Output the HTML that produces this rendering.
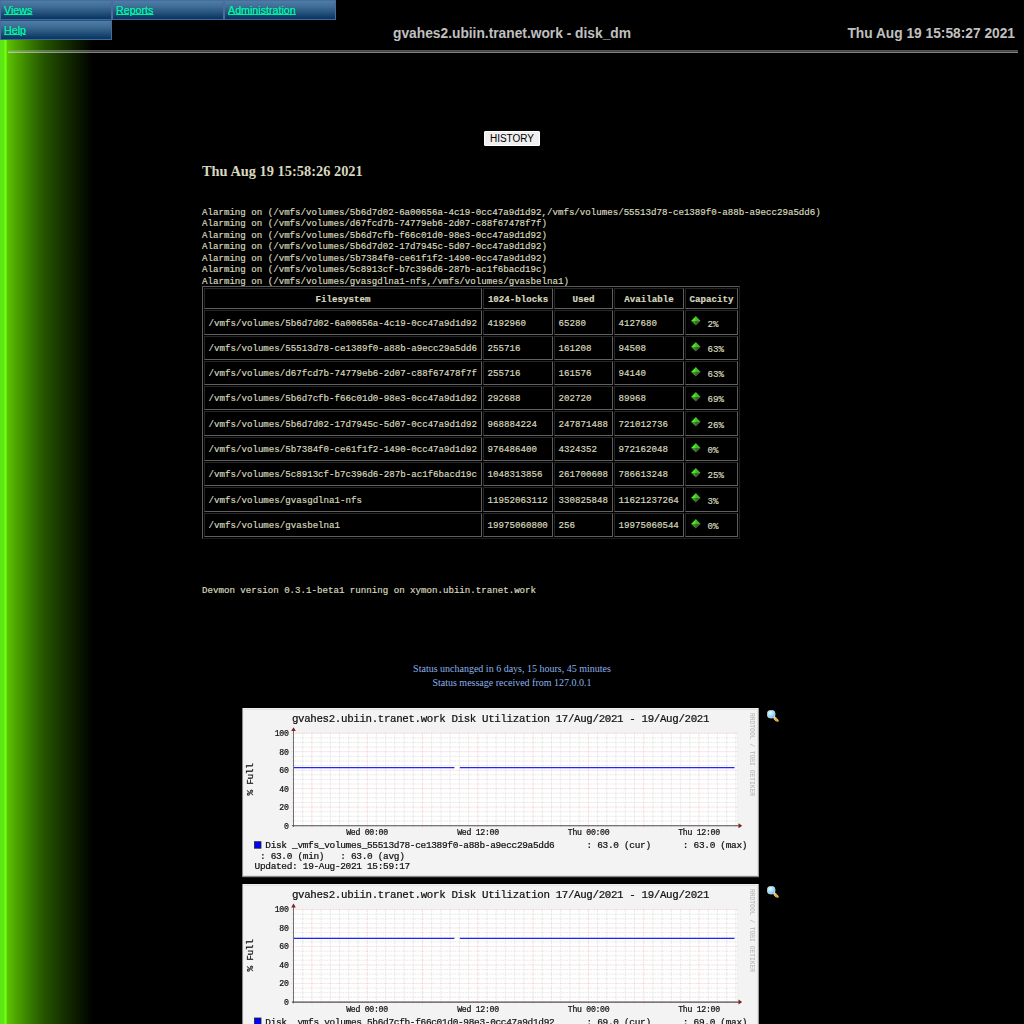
<!DOCTYPE html>
<html><head><meta charset="utf-8"><title>gvahes2.ubiin.tranet.work - disk_dm</title>
<style>
html,body{margin:0;padding:0;}
body{width:1024px;height:1024px;overflow:hidden;position:relative;background:#000;color:#D8D8BF;font-family:"Liberation Serif",serif;}
#bg{position:absolute;left:0;top:0;width:100px;height:1024px;background:linear-gradient(to right,#5ce614 0px,#5ce614 3.9px,#70ff0c 4.7px,#70ff0c 6.1px,#5cc400 7.2px,#4fa800 15px,#3f8a00 25px,#306c00 35px,#245200 45px,#1c4000 55px,#142e00 65px,#0d1e00 75px,#060e00 85px,#000 93px);}
.abs{position:absolute;white-space:pre;}
.mono{font-family:"Liberation Mono",monospace;font-size:9.15px;line-height:11.53px;-webkit-text-stroke:0.18px #D8D8BF;}
.sans{font-family:"Liberation Sans",sans-serif;}
.serif{font-family:"Liberation Serif",serif;}
/* menu */
.mi{position:absolute;width:110px;height:18px;border:1px solid #4a6b9c;border-bottom-color:#43659a;background:linear-gradient(to bottom,#4b7ea7 0%,#3f6e96 30%,#2a5680 60%,#0d3d66 90%,#063860 100%);box-sizing:content-box;}
.mi span{position:absolute;left:3px;top:3.0px;font-family:"Liberation Sans",sans-serif;font-size:10.7px;line-height:13px;color:#00f0a0;text-decoration:underline;text-underline-offset:0.3px;text-decoration-thickness:1px;text-shadow:0 0 0.6px #00f0a0;}
/* table */
.c{position:absolute;box-sizing:border-box;border:1px solid;border-color:#262626 #5e5e5e #606060 #262626;}
</style></head>
<body>
<div id="bg"></div>
<div class="mi" style="left:0px;top:0px"><span>Views</span></div>
<div class="mi" style="left:112px;top:0px"><span>Reports</span></div>
<div class="mi" style="left:224px;top:0px"><span>Administration</span></div>
<div class="mi" style="left:0px;top:20px;border-top-color:#2e4e82"><span>Help</span></div>
<div class="abs sans" style="left:312px;width:400px;text-align:center;top:26.3px;font-size:13.78px;line-height:16px;font-weight:bold;color:#c0c0c0">gvahes2.ubiin.tranet.work - disk_dm</div>
<div class="abs sans" style="right:9px;top:26.3px;font-size:13.75px;line-height:16px;font-weight:bold;color:#c0c0c0">Thu Aug 19 15:58:27 2021</div>
<div class="abs" style="left:8px;top:50px;width:1010px;height:3px;background:linear-gradient(to bottom,rgba(154,154,154,.55) 0,rgba(154,154,154,.55) 1px,rgba(200,200,200,.34) 1px,rgba(200,200,200,.34) 2px,rgba(238,238,238,.54) 2px,rgba(238,238,238,.54) 3px)"></div>
<div class="abs sans" style="left:484px;top:131px;width:56px;height:15px;box-sizing:border-box;background:#efefef;border:1px solid #fff;border-radius:1px;color:#000;font-size:10px;line-height:13px;text-align:center">HISTORY</div>
<div class="abs serif" style="left:202px;top:163px;font-size:14.4px;line-height:17px;font-weight:bold">Thu Aug 19 15:58:26 2021</div>
<div class="abs mono" style="left:202px;top:206.6px">Alarming on (/vmfs/volumes/5b6d7d02-6a00656a-4c19-0cc47a9d1d92,/vmfs/volumes/55513d78-ce1389f0-a88b-a9ecc29a5dd6)
Alarming on (/vmfs/volumes/d67fcd7b-74779eb6-2d07-c88f67478f7f)
Alarming on (/vmfs/volumes/5b6d7cfb-f66c01d0-98e3-0cc47a9d1d92)
Alarming on (/vmfs/volumes/5b6d7d02-17d7945c-5d07-0cc47a9d1d92)
Alarming on (/vmfs/volumes/5b7384f0-ce61f1f2-1490-0cc47a9d1d92)
Alarming on (/vmfs/volumes/5c8913cf-b7c396d6-287b-ac1f6bacd19c)
Alarming on (/vmfs/volumes/gvasgdlna1-nfs,/vmfs/volumes/gvasbelna1)</div>
<div class="abs" style="left:202px;top:286px;width:538px;height:253px;box-sizing:border-box;border:1px solid;border-color:#5c5c5c #202020 #1c1c1c #606060"></div>
<div class="c" style="left:204px;top:288px;width:278px;height:21px"><div class="abs mono" style="left:0;width:276px;text-align:center;top:4.5px;font-weight:bold">Filesystem</div></div>
<div class="c" style="left:483px;top:288px;width:70px;height:21px"><div class="abs mono" style="left:0;width:68px;text-align:center;top:4.5px;font-weight:bold">1024-blocks</div></div>
<div class="c" style="left:554px;top:288px;width:59px;height:21px"><div class="abs mono" style="left:0;width:57px;text-align:center;top:4.5px;font-weight:bold">Used</div></div>
<div class="c" style="left:614px;top:288px;width:70px;height:21px"><div class="abs mono" style="left:0;width:68px;text-align:center;top:4.5px;font-weight:bold">Available</div></div>
<div class="c" style="left:685px;top:288px;width:53px;height:21px"><div class="abs mono" style="left:0;width:51px;text-align:center;top:4.5px;font-weight:bold">Capacity</div></div>
<div class="c" style="left:204px;top:310px;width:278px;height:25px"><div class="abs mono" style="left:3.6px;top:6.54px">/vmfs/volumes/5b6d7d02-6a00656a-4c19-0cc47a9d1d92</div></div>
<div class="c" style="left:483px;top:310px;width:70px;height:25px"><div class="abs mono" style="left:3.6px;top:6.54px">4192960</div></div>
<div class="c" style="left:554px;top:310px;width:59px;height:25px"><div class="abs mono" style="left:3.6px;top:6.54px">65280</div></div>
<div class="c" style="left:614px;top:310px;width:70px;height:25px"><div class="abs mono" style="left:3.6px;top:6.54px">4127680</div></div>
<div class="c" style="left:685px;top:310px;width:53px;height:25px"><svg class="abs" style="left:3.7px;top:4px" width="12" height="12" viewBox="0 0 12 12"><polygon points="5.9,0.9 5.9,5.9 1.1,5.9" fill="#40f810"/><polygon points="5.9,0.9 10.6,5.9 5.9,5.9" fill="#4cb03c"/><polygon points="1.1,5.9 5.9,5.9 5.9,10.6" fill="#3f9030"/><polygon points="5.9,5.9 10.6,5.9 5.9,10.6" fill="#46622a"/></svg><div class="abs mono" style="left:21.6px;top:7.74px">2%</div></div>
<div class="c" style="left:204px;top:336px;width:278px;height:24px"><div class="abs mono" style="left:3.6px;top:6.04px">/vmfs/volumes/55513d78-ce1389f0-a88b-a9ecc29a5dd6</div></div>
<div class="c" style="left:483px;top:336px;width:70px;height:24px"><div class="abs mono" style="left:3.6px;top:6.04px">255716</div></div>
<div class="c" style="left:554px;top:336px;width:59px;height:24px"><div class="abs mono" style="left:3.6px;top:6.04px">161208</div></div>
<div class="c" style="left:614px;top:336px;width:70px;height:24px"><div class="abs mono" style="left:3.6px;top:6.04px">94508</div></div>
<div class="c" style="left:685px;top:336px;width:53px;height:24px"><svg class="abs" style="left:3.7px;top:4px" width="12" height="12" viewBox="0 0 12 12"><polygon points="5.9,0.9 5.9,5.9 1.1,5.9" fill="#40f810"/><polygon points="5.9,0.9 10.6,5.9 5.9,5.9" fill="#4cb03c"/><polygon points="1.1,5.9 5.9,5.9 5.9,10.6" fill="#3f9030"/><polygon points="5.9,5.9 10.6,5.9 5.9,10.6" fill="#46622a"/></svg><div class="abs mono" style="left:21.6px;top:7.24px">63%</div></div>
<div class="c" style="left:204px;top:361px;width:278px;height:24px"><div class="abs mono" style="left:3.6px;top:6.04px">/vmfs/volumes/d67fcd7b-74779eb6-2d07-c88f67478f7f</div></div>
<div class="c" style="left:483px;top:361px;width:70px;height:24px"><div class="abs mono" style="left:3.6px;top:6.04px">255716</div></div>
<div class="c" style="left:554px;top:361px;width:59px;height:24px"><div class="abs mono" style="left:3.6px;top:6.04px">161576</div></div>
<div class="c" style="left:614px;top:361px;width:70px;height:24px"><div class="abs mono" style="left:3.6px;top:6.04px">94140</div></div>
<div class="c" style="left:685px;top:361px;width:53px;height:24px"><svg class="abs" style="left:3.7px;top:4px" width="12" height="12" viewBox="0 0 12 12"><polygon points="5.9,0.9 5.9,5.9 1.1,5.9" fill="#40f810"/><polygon points="5.9,0.9 10.6,5.9 5.9,5.9" fill="#4cb03c"/><polygon points="1.1,5.9 5.9,5.9 5.9,10.6" fill="#3f9030"/><polygon points="5.9,5.9 10.6,5.9 5.9,10.6" fill="#46622a"/></svg><div class="abs mono" style="left:21.6px;top:7.24px">63%</div></div>
<div class="c" style="left:204px;top:386px;width:278px;height:24px"><div class="abs mono" style="left:3.6px;top:6.04px">/vmfs/volumes/5b6d7cfb-f66c01d0-98e3-0cc47a9d1d92</div></div>
<div class="c" style="left:483px;top:386px;width:70px;height:24px"><div class="abs mono" style="left:3.6px;top:6.04px">292688</div></div>
<div class="c" style="left:554px;top:386px;width:59px;height:24px"><div class="abs mono" style="left:3.6px;top:6.04px">202720</div></div>
<div class="c" style="left:614px;top:386px;width:70px;height:24px"><div class="abs mono" style="left:3.6px;top:6.04px">89968</div></div>
<div class="c" style="left:685px;top:386px;width:53px;height:24px"><svg class="abs" style="left:3.7px;top:4px" width="12" height="12" viewBox="0 0 12 12"><polygon points="5.9,0.9 5.9,5.9 1.1,5.9" fill="#40f810"/><polygon points="5.9,0.9 10.6,5.9 5.9,5.9" fill="#4cb03c"/><polygon points="1.1,5.9 5.9,5.9 5.9,10.6" fill="#3f9030"/><polygon points="5.9,5.9 10.6,5.9 5.9,10.6" fill="#46622a"/></svg><div class="abs mono" style="left:21.6px;top:7.24px">69%</div></div>
<div class="c" style="left:204px;top:411px;width:278px;height:25px"><div class="abs mono" style="left:3.6px;top:6.54px">/vmfs/volumes/5b6d7d02-17d7945c-5d07-0cc47a9d1d92</div></div>
<div class="c" style="left:483px;top:411px;width:70px;height:25px"><div class="abs mono" style="left:3.6px;top:6.54px">968884224</div></div>
<div class="c" style="left:554px;top:411px;width:59px;height:25px"><div class="abs mono" style="left:3.6px;top:6.54px">247871488</div></div>
<div class="c" style="left:614px;top:411px;width:70px;height:25px"><div class="abs mono" style="left:3.6px;top:6.54px">721012736</div></div>
<div class="c" style="left:685px;top:411px;width:53px;height:25px"><svg class="abs" style="left:3.7px;top:4px" width="12" height="12" viewBox="0 0 12 12"><polygon points="5.9,0.9 5.9,5.9 1.1,5.9" fill="#40f810"/><polygon points="5.9,0.9 10.6,5.9 5.9,5.9" fill="#4cb03c"/><polygon points="1.1,5.9 5.9,5.9 5.9,10.6" fill="#3f9030"/><polygon points="5.9,5.9 10.6,5.9 5.9,10.6" fill="#46622a"/></svg><div class="abs mono" style="left:21.6px;top:7.74px">26%</div></div>
<div class="c" style="left:204px;top:437px;width:278px;height:24px"><div class="abs mono" style="left:3.6px;top:6.04px">/vmfs/volumes/5b7384f0-ce61f1f2-1490-0cc47a9d1d92</div></div>
<div class="c" style="left:483px;top:437px;width:70px;height:24px"><div class="abs mono" style="left:3.6px;top:6.04px">976486400</div></div>
<div class="c" style="left:554px;top:437px;width:59px;height:24px"><div class="abs mono" style="left:3.6px;top:6.04px">4324352</div></div>
<div class="c" style="left:614px;top:437px;width:70px;height:24px"><div class="abs mono" style="left:3.6px;top:6.04px">972162048</div></div>
<div class="c" style="left:685px;top:437px;width:53px;height:24px"><svg class="abs" style="left:3.7px;top:4px" width="12" height="12" viewBox="0 0 12 12"><polygon points="5.9,0.9 5.9,5.9 1.1,5.9" fill="#40f810"/><polygon points="5.9,0.9 10.6,5.9 5.9,5.9" fill="#4cb03c"/><polygon points="1.1,5.9 5.9,5.9 5.9,10.6" fill="#3f9030"/><polygon points="5.9,5.9 10.6,5.9 5.9,10.6" fill="#46622a"/></svg><div class="abs mono" style="left:21.6px;top:7.24px">0%</div></div>
<div class="c" style="left:204px;top:462px;width:278px;height:24px"><div class="abs mono" style="left:3.6px;top:6.04px">/vmfs/volumes/5c8913cf-b7c396d6-287b-ac1f6bacd19c</div></div>
<div class="c" style="left:483px;top:462px;width:70px;height:24px"><div class="abs mono" style="left:3.6px;top:6.04px">1048313856</div></div>
<div class="c" style="left:554px;top:462px;width:59px;height:24px"><div class="abs mono" style="left:3.6px;top:6.04px">261700608</div></div>
<div class="c" style="left:614px;top:462px;width:70px;height:24px"><div class="abs mono" style="left:3.6px;top:6.04px">786613248</div></div>
<div class="c" style="left:685px;top:462px;width:53px;height:24px"><svg class="abs" style="left:3.7px;top:4px" width="12" height="12" viewBox="0 0 12 12"><polygon points="5.9,0.9 5.9,5.9 1.1,5.9" fill="#40f810"/><polygon points="5.9,0.9 10.6,5.9 5.9,5.9" fill="#4cb03c"/><polygon points="1.1,5.9 5.9,5.9 5.9,10.6" fill="#3f9030"/><polygon points="5.9,5.9 10.6,5.9 5.9,10.6" fill="#46622a"/></svg><div class="abs mono" style="left:21.6px;top:7.24px">25%</div></div>
<div class="c" style="left:204px;top:487px;width:278px;height:25px"><div class="abs mono" style="left:3.6px;top:6.54px">/vmfs/volumes/gvasgdlna1-nfs</div></div>
<div class="c" style="left:483px;top:487px;width:70px;height:25px"><div class="abs mono" style="left:3.6px;top:6.54px">11952063112</div></div>
<div class="c" style="left:554px;top:487px;width:59px;height:25px"><div class="abs mono" style="left:3.6px;top:6.54px">330825848</div></div>
<div class="c" style="left:614px;top:487px;width:70px;height:25px"><div class="abs mono" style="left:3.6px;top:6.54px">11621237264</div></div>
<div class="c" style="left:685px;top:487px;width:53px;height:25px"><svg class="abs" style="left:3.7px;top:4px" width="12" height="12" viewBox="0 0 12 12"><polygon points="5.9,0.9 5.9,5.9 1.1,5.9" fill="#40f810"/><polygon points="5.9,0.9 10.6,5.9 5.9,5.9" fill="#4cb03c"/><polygon points="1.1,5.9 5.9,5.9 5.9,10.6" fill="#3f9030"/><polygon points="5.9,5.9 10.6,5.9 5.9,10.6" fill="#46622a"/></svg><div class="abs mono" style="left:21.6px;top:7.74px">3%</div></div>
<div class="c" style="left:204px;top:513px;width:278px;height:24px"><div class="abs mono" style="left:3.6px;top:6.04px">/vmfs/volumes/gvasbelna1</div></div>
<div class="c" style="left:483px;top:513px;width:70px;height:24px"><div class="abs mono" style="left:3.6px;top:6.04px">19975060800</div></div>
<div class="c" style="left:554px;top:513px;width:59px;height:24px"><div class="abs mono" style="left:3.6px;top:6.04px">256</div></div>
<div class="c" style="left:614px;top:513px;width:70px;height:24px"><div class="abs mono" style="left:3.6px;top:6.04px">19975060544</div></div>
<div class="c" style="left:685px;top:513px;width:53px;height:24px"><svg class="abs" style="left:3.7px;top:4px" width="12" height="12" viewBox="0 0 12 12"><polygon points="5.9,0.9 5.9,5.9 1.1,5.9" fill="#40f810"/><polygon points="5.9,0.9 10.6,5.9 5.9,5.9" fill="#4cb03c"/><polygon points="1.1,5.9 5.9,5.9 5.9,10.6" fill="#3f9030"/><polygon points="5.9,5.9 10.6,5.9 5.9,10.6" fill="#46622a"/></svg><div class="abs mono" style="left:21.6px;top:7.24px">0%</div></div>
<div class="abs mono" style="left:202px;top:585px">Devmon version 0.3.1-beta1 running on xymon.ubiin.tranet.work</div>
<div class="abs serif" style="left:312px;width:400px;text-align:center;top:662px;font-size:10px;line-height:14px;color:#8db0ec">Status unchanged in 6 days, 15 hours, 45 minutes
Status message received from 127.0.0.1</div>
<div class="abs" style="left:242px;top:708px;width:517px;height:169px;background:#f3f3f3;overflow:hidden;opacity:0.999"><div class="abs" style="left:0;top:0;width:517px;height:1px;background:#efefef"></div><div class="abs" style="left:0;top:1px;width:517px;height:1px;background:#e2e2e2"></div><div class="abs" style="left:1px;top:0;width:1px;height:169px;background:#ececec"></div><div class="abs" style="left:0;top:0;width:1px;height:169px;background:#8c8c8c"></div><div class="abs" style="left:515px;top:1px;width:1px;height:168px;background:#e2e2e2"></div><div class="abs" style="left:516px;top:0px;width:1px;height:169px;background:#a0a0a0"></div><div class="abs" style="left:1px;top:167px;width:515px;height:1px;background:#e0e0e0"></div><div class="abs" style="left:0px;top:168px;width:517px;height:1px;background:#8a8a8a"></div><div class="abs" style="left:0;top:0px;width:517px;height:169px"><svg class="abs" style="left:0;top:0" width="517" height="169" viewBox="0 0 517 169"><g transform="translate(0,0)"><rect x="51" y="25.3" width="444" height="92.2" fill="#fff"/><path d="M493.9 25.3V119.0M484.7 25.3V119.0M475.4 25.3V119.0M466.2 25.3V119.0M447.8 25.3V119.0M438.6 25.3V119.0M429.3 25.3V119.0M420.1 25.3V119.0M410.9 25.3V119.0M392.5 25.3V119.0M383.3 25.3V119.0M374.0 25.3V119.0M364.8 25.3V119.0M355.6 25.3V119.0M337.2 25.3V119.0M328.0 25.3V119.0M318.7 25.3V119.0M309.5 25.3V119.0M300.3 25.3V119.0M281.9 25.3V119.0M272.7 25.3V119.0M263.4 25.3V119.0M254.2 25.3V119.0M245.0 25.3V119.0M226.6 25.3V119.0M217.4 25.3V119.0M208.1 25.3V119.0M198.9 25.3V119.0M189.7 25.3V119.0M171.3 25.3V119.0M162.1 25.3V119.0M152.8 25.3V119.0M143.6 25.3V119.0M134.4 25.3V119.0M116.0 25.3V119.0M106.8 25.3V119.0M97.5 25.3V119.0M88.3 25.3V119.0M79.1 25.3V119.0M60.7 25.3V119.0M51.5 25.3V119.0" stroke="#8c8c8c" stroke-opacity="0.36" stroke-width="0.7" stroke-dasharray="0.8 0.8" fill="none"/><path d="M50 112.9H495.5M50 108.3H495.5M50 103.7H495.5M50 94.5H495.5M50 89.8H495.5M50 85.2H495.5M50 76.0H495.5M50 71.4H495.5M50 66.8H495.5M50 57.6H495.5M50 53.0H495.5M50 48.3H495.5M50 39.1H495.5M50 34.5H495.5M50 29.9H495.5" stroke="#8c8c8c" stroke-opacity="0.36" stroke-width="0.7" stroke-dasharray="0.8 0.8" fill="none"/><path d="M457.0 25.3V120.0M401.7 25.3V120.0M346.4 25.3V120.0M291.1 25.3V120.0M235.8 25.3V120.0M180.5 25.3V120.0M125.2 25.3V120.0M69.9 25.3V120.0" stroke="#e05050" stroke-opacity="0.36" stroke-width="0.8" stroke-dasharray="0.8 0.8" fill="none"/><path d="M49.5 117.5H496M49.5 99.1H496M49.5 80.6H496M49.5 62.2H496M49.5 43.7H496M49.5 25.3H496" stroke="#e05050" stroke-opacity="0.36" stroke-width="0.8" stroke-dasharray="0.8 0.8" fill="none"/><path d="M51.5 59.71H212.4M217.8 59.71H492.5" stroke="#2424f4" stroke-width="1.25" fill="none"/><path d="M51.5 22.3V119.0" stroke="#707070" stroke-width="1" fill="none"/><path d="M50 117.8H498" stroke="#565050" stroke-width="1.1" fill="none"/><polygon points="496.5,115.3 500.2,117.8 496.5,120.3" fill="#802020"/><polygon points="49.2,23.1 51.5,19.3 53.8,23.1" fill="#802020"/><rect x="12.5" y="133.7" width="6.5" height="6.5" fill="#0000ff" stroke="#222" stroke-width="0.8"/></g></svg><div class="abs" style="font-family:'Liberation Mono',monospace;color:#111;-webkit-text-stroke:0.22px #111;left:0;width:517px;text-align:center;top:4.6px;font-size:10.8px;line-height:12px;letter-spacing:-0.345px;padding-left:0px">gvahes2.ubiin.tranet.work Disk Utilization 17/Aug/2021 - 19/Aug/2021</div><div class="abs" style="font-family:'Liberation Mono',monospace;color:#111;-webkit-text-stroke:0.22px #111;left:20px;width:26.5px;text-align:right;top:113.6px;font-size:8.2px;letter-spacing:-0.3px;line-height:9px">0</div><div class="abs" style="font-family:'Liberation Mono',monospace;color:#111;-webkit-text-stroke:0.22px #111;left:20px;width:26.5px;text-align:right;top:95.2px;font-size:8.2px;letter-spacing:-0.3px;line-height:9px">20</div><div class="abs" style="font-family:'Liberation Mono',monospace;color:#111;-webkit-text-stroke:0.22px #111;left:20px;width:26.5px;text-align:right;top:76.7px;font-size:8.2px;letter-spacing:-0.3px;line-height:9px">40</div><div class="abs" style="font-family:'Liberation Mono',monospace;color:#111;-webkit-text-stroke:0.22px #111;left:20px;width:26.5px;text-align:right;top:58.3px;font-size:8.2px;letter-spacing:-0.3px;line-height:9px">60</div><div class="abs" style="font-family:'Liberation Mono',monospace;color:#111;-webkit-text-stroke:0.22px #111;left:20px;width:26.5px;text-align:right;top:39.8px;font-size:8.2px;letter-spacing:-0.3px;line-height:9px">80</div><div class="abs" style="font-family:'Liberation Mono',monospace;color:#111;-webkit-text-stroke:0.22px #111;left:20px;width:26.5px;text-align:right;top:21.4px;font-size:8.2px;letter-spacing:-0.3px;line-height:9px">100</div><div class="abs" style="font-family:'Liberation Mono',monospace;color:#111;-webkit-text-stroke:0.22px #111;left:95px;width:60px;text-align:center;top:120.3px;font-size:8.2px;letter-spacing:-0.3px;line-height:9px">Wed 00:00</div><div class="abs" style="font-family:'Liberation Mono',monospace;color:#111;-webkit-text-stroke:0.22px #111;left:206px;width:60px;text-align:center;top:120.3px;font-size:8.2px;letter-spacing:-0.3px;line-height:9px">Wed 12:00</div><div class="abs" style="font-family:'Liberation Mono',monospace;color:#111;-webkit-text-stroke:0.22px #111;left:316.6px;width:60px;text-align:center;top:120.3px;font-size:8.2px;letter-spacing:-0.3px;line-height:9px">Thu 00:00</div><div class="abs" style="font-family:'Liberation Mono',monospace;color:#111;-webkit-text-stroke:0.22px #111;left:427px;width:60px;text-align:center;top:120.3px;font-size:8.2px;letter-spacing:-0.3px;line-height:9px">Thu 12:00</div><div class="abs" style="font-family:'Liberation Mono',monospace;color:#111;-webkit-text-stroke:0.22px #111;left:-12.2px;width:40px;text-align:center;top:66.5px;font-size:9.45px;letter-spacing:-0.31px;line-height:9px;transform:rotate(-90deg)">% Full</div><div class="abs" style="font-family:'Liberation Mono',monospace;color:#b4b4b4;left:458.9px;width:100px;text-align:left;top:50.5px;font-size:6.3px;line-height:8px;transform:rotate(90deg)">RRDTOOL / TOBI OETIKER</div><div class="abs" style="font-family:'Liberation Mono',monospace;color:#111;-webkit-text-stroke:0.22px #111;left:23.3px;top:132.3px;font-size:9.45px;letter-spacing:-0.31px;line-height:11px">Disk _vmfs_volumes_55513d78-ce1389f0-a88b-a9ecc29a5dd6      : 63.0 (cur)      : 63.0 (max)</div><div class="abs" style="font-family:'Liberation Mono',monospace;color:#111;-webkit-text-stroke:0.22px #111;left:12.6px;top:142.5px;font-size:9.45px;letter-spacing:-0.31px;line-height:11px"> : 63.0 (min)   : 63.0 (avg)</div><div class="abs" style="font-family:'Liberation Mono',monospace;color:#111;-webkit-text-stroke:0.22px #111;left:12.6px;top:153.2px;font-size:9.45px;letter-spacing:-0.31px;line-height:11px">Updated: 19-Aug-2021 15:59:17</div></div></div><div class="abs" style="left:243px;top:877px;width:516px;height:1px;background:#1c1c1c"></div><svg class="abs" style="left:767px;top:709.5px" width="13" height="13" viewBox="0 0 13 13"><defs><radialGradient id="lg708" cx="0.4" cy="0.35" r="0.7"><stop offset="0" stop-color="#e8ffff"/><stop offset="0.6" stop-color="#9adcff"/><stop offset="1" stop-color="#5ab4f0"/></radialGradient></defs><path d="M7.3 7.9L10.1 10.7" stroke="#ffe8c8" stroke-width="2.6" stroke-linecap="butt"/><path d="M7.4 7.4L10.7 10.7" stroke="#eea024" stroke-width="2.3" stroke-linecap="round"/><path d="M8.0 9.3L9.2 8.1M9.2 10.4L10.4 9.2" stroke="#ffd070" stroke-width="0.6"/><path d="M7 7L8.4 8.4" stroke="#c8c8e0" stroke-width="1.6"/><rect x="0.4" y="0.4" width="7.6" height="7.6" rx="3" fill="url(#lg708)" stroke="#d8ecff" stroke-width="0.7"/></svg>
<div class="abs" style="left:242px;top:884px;width:517px;height:169px;background:#f3f3f3;overflow:hidden;opacity:0.999"><div class="abs" style="left:0;top:0;width:517px;height:1px;background:#efefef"></div><div class="abs" style="left:0;top:1px;width:517px;height:1px;background:#e2e2e2"></div><div class="abs" style="left:1px;top:0;width:1px;height:169px;background:#ececec"></div><div class="abs" style="left:0;top:0;width:1px;height:169px;background:#8c8c8c"></div><div class="abs" style="left:515px;top:1px;width:1px;height:168px;background:#e2e2e2"></div><div class="abs" style="left:516px;top:0px;width:1px;height:169px;background:#a0a0a0"></div><div class="abs" style="left:1px;top:167px;width:515px;height:1px;background:#e0e0e0"></div><div class="abs" style="left:0px;top:168px;width:517px;height:1px;background:#8a8a8a"></div><div class="abs" style="left:0;top:0px;width:517px;height:169px"><svg class="abs" style="left:0;top:0" width="517" height="169" viewBox="0 0 517 169"><g transform="translate(0,0.3)"><rect x="51" y="25.3" width="444" height="92.2" fill="#fff"/><path d="M493.9 25.3V119.0M484.7 25.3V119.0M475.4 25.3V119.0M466.2 25.3V119.0M447.8 25.3V119.0M438.6 25.3V119.0M429.3 25.3V119.0M420.1 25.3V119.0M410.9 25.3V119.0M392.5 25.3V119.0M383.3 25.3V119.0M374.0 25.3V119.0M364.8 25.3V119.0M355.6 25.3V119.0M337.2 25.3V119.0M328.0 25.3V119.0M318.7 25.3V119.0M309.5 25.3V119.0M300.3 25.3V119.0M281.9 25.3V119.0M272.7 25.3V119.0M263.4 25.3V119.0M254.2 25.3V119.0M245.0 25.3V119.0M226.6 25.3V119.0M217.4 25.3V119.0M208.1 25.3V119.0M198.9 25.3V119.0M189.7 25.3V119.0M171.3 25.3V119.0M162.1 25.3V119.0M152.8 25.3V119.0M143.6 25.3V119.0M134.4 25.3V119.0M116.0 25.3V119.0M106.8 25.3V119.0M97.5 25.3V119.0M88.3 25.3V119.0M79.1 25.3V119.0M60.7 25.3V119.0M51.5 25.3V119.0" stroke="#8c8c8c" stroke-opacity="0.36" stroke-width="0.7" stroke-dasharray="0.8 0.8" fill="none"/><path d="M50 112.9H495.5M50 108.3H495.5M50 103.7H495.5M50 94.5H495.5M50 89.8H495.5M50 85.2H495.5M50 76.0H495.5M50 71.4H495.5M50 66.8H495.5M50 57.6H495.5M50 53.0H495.5M50 48.3H495.5M50 39.1H495.5M50 34.5H495.5M50 29.9H495.5" stroke="#8c8c8c" stroke-opacity="0.36" stroke-width="0.7" stroke-dasharray="0.8 0.8" fill="none"/><path d="M457.0 25.3V120.0M401.7 25.3V120.0M346.4 25.3V120.0M291.1 25.3V120.0M235.8 25.3V120.0M180.5 25.3V120.0M125.2 25.3V120.0M69.9 25.3V120.0" stroke="#e05050" stroke-opacity="0.36" stroke-width="0.8" stroke-dasharray="0.8 0.8" fill="none"/><path d="M49.5 117.5H496M49.5 99.1H496M49.5 80.6H496M49.5 62.2H496M49.5 43.7H496M49.5 25.3H496" stroke="#e05050" stroke-opacity="0.36" stroke-width="0.8" stroke-dasharray="0.8 0.8" fill="none"/><path d="M51.5 54.18H212.4M217.8 54.18H492.5" stroke="#2424f4" stroke-width="1.25" fill="none"/><path d="M51.5 22.3V119.0" stroke="#707070" stroke-width="1" fill="none"/><path d="M50 117.8H498" stroke="#565050" stroke-width="1.1" fill="none"/><polygon points="496.5,115.3 500.2,117.8 496.5,120.3" fill="#802020"/><polygon points="49.2,23.1 51.5,19.3 53.8,23.1" fill="#802020"/><rect x="12.5" y="133.7" width="6.5" height="6.5" fill="#0000ff" stroke="#222" stroke-width="0.8"/></g></svg><div class="abs" style="font-family:'Liberation Mono',monospace;color:#111;-webkit-text-stroke:0.22px #111;left:0;width:517px;text-align:center;top:4.6px;font-size:10.8px;line-height:12px;letter-spacing:-0.345px;padding-left:0px">gvahes2.ubiin.tranet.work Disk Utilization 17/Aug/2021 - 19/Aug/2021</div><div class="abs" style="font-family:'Liberation Mono',monospace;color:#111;-webkit-text-stroke:0.22px #111;left:20px;width:26.5px;text-align:right;top:113.6px;font-size:8.2px;letter-spacing:-0.3px;line-height:9px">0</div><div class="abs" style="font-family:'Liberation Mono',monospace;color:#111;-webkit-text-stroke:0.22px #111;left:20px;width:26.5px;text-align:right;top:95.2px;font-size:8.2px;letter-spacing:-0.3px;line-height:9px">20</div><div class="abs" style="font-family:'Liberation Mono',monospace;color:#111;-webkit-text-stroke:0.22px #111;left:20px;width:26.5px;text-align:right;top:76.7px;font-size:8.2px;letter-spacing:-0.3px;line-height:9px">40</div><div class="abs" style="font-family:'Liberation Mono',monospace;color:#111;-webkit-text-stroke:0.22px #111;left:20px;width:26.5px;text-align:right;top:58.3px;font-size:8.2px;letter-spacing:-0.3px;line-height:9px">60</div><div class="abs" style="font-family:'Liberation Mono',monospace;color:#111;-webkit-text-stroke:0.22px #111;left:20px;width:26.5px;text-align:right;top:39.8px;font-size:8.2px;letter-spacing:-0.3px;line-height:9px">80</div><div class="abs" style="font-family:'Liberation Mono',monospace;color:#111;-webkit-text-stroke:0.22px #111;left:20px;width:26.5px;text-align:right;top:21.4px;font-size:8.2px;letter-spacing:-0.3px;line-height:9px">100</div><div class="abs" style="font-family:'Liberation Mono',monospace;color:#111;-webkit-text-stroke:0.22px #111;left:95px;width:60px;text-align:center;top:121.1px;font-size:8.2px;letter-spacing:-0.3px;line-height:9px">Wed 00:00</div><div class="abs" style="font-family:'Liberation Mono',monospace;color:#111;-webkit-text-stroke:0.22px #111;left:206px;width:60px;text-align:center;top:121.1px;font-size:8.2px;letter-spacing:-0.3px;line-height:9px">Wed 12:00</div><div class="abs" style="font-family:'Liberation Mono',monospace;color:#111;-webkit-text-stroke:0.22px #111;left:316.6px;width:60px;text-align:center;top:121.1px;font-size:8.2px;letter-spacing:-0.3px;line-height:9px">Thu 00:00</div><div class="abs" style="font-family:'Liberation Mono',monospace;color:#111;-webkit-text-stroke:0.22px #111;left:427px;width:60px;text-align:center;top:121.1px;font-size:8.2px;letter-spacing:-0.3px;line-height:9px">Thu 12:00</div><div class="abs" style="font-family:'Liberation Mono',monospace;color:#111;-webkit-text-stroke:0.22px #111;left:-12.2px;width:40px;text-align:center;top:66.5px;font-size:9.45px;letter-spacing:-0.31px;line-height:9px;transform:rotate(-90deg)">% Full</div><div class="abs" style="font-family:'Liberation Mono',monospace;color:#b4b4b4;left:458.9px;width:100px;text-align:left;top:50.5px;font-size:6.3px;line-height:8px;transform:rotate(90deg)">RRDTOOL / TOBI OETIKER</div><div class="abs" style="font-family:'Liberation Mono',monospace;color:#111;-webkit-text-stroke:0.22px #111;left:23.3px;top:133.10000000000002px;font-size:9.45px;letter-spacing:-0.31px;line-height:11px">Disk _vmfs_volumes_5b6d7cfb-f66c01d0-98e3-0cc47a9d1d92      : 69.0 (cur)      : 69.0 (max)</div><div class="abs" style="font-family:'Liberation Mono',monospace;color:#111;-webkit-text-stroke:0.22px #111;left:12.6px;top:143.3px;font-size:9.45px;letter-spacing:-0.31px;line-height:11px"> : 69.0 (min)   : 69.0 (avg)</div><div class="abs" style="font-family:'Liberation Mono',monospace;color:#111;-webkit-text-stroke:0.22px #111;left:12.6px;top:154.0px;font-size:9.45px;letter-spacing:-0.31px;line-height:11px">Updated: 19-Aug-2021 15:59:17</div></div></div><div class="abs" style="left:243px;top:1053px;width:516px;height:1px;background:#1c1c1c"></div><svg class="abs" style="left:767px;top:885.5px" width="13" height="13" viewBox="0 0 13 13"><defs><radialGradient id="lg884" cx="0.4" cy="0.35" r="0.7"><stop offset="0" stop-color="#e8ffff"/><stop offset="0.6" stop-color="#9adcff"/><stop offset="1" stop-color="#5ab4f0"/></radialGradient></defs><path d="M7.3 7.9L10.1 10.7" stroke="#ffe8c8" stroke-width="2.6" stroke-linecap="butt"/><path d="M7.4 7.4L10.7 10.7" stroke="#eea024" stroke-width="2.3" stroke-linecap="round"/><path d="M8.0 9.3L9.2 8.1M9.2 10.4L10.4 9.2" stroke="#ffd070" stroke-width="0.6"/><path d="M7 7L8.4 8.4" stroke="#c8c8e0" stroke-width="1.6"/><rect x="0.4" y="0.4" width="7.6" height="7.6" rx="3" fill="url(#lg884)" stroke="#d8ecff" stroke-width="0.7"/></svg>
</body></html>
